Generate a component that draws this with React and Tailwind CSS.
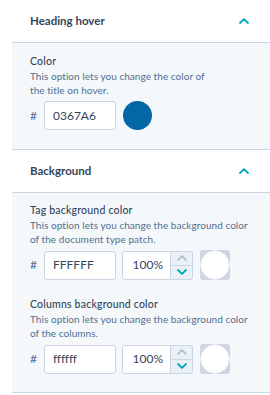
import React from "react";

const font = { fontFamily: "Lato, 'Noto Sans', sans-serif" };

const Chevron = ({ up = true, color = "#00a4bd" }) => (
  <svg width="10" height="6" viewBox="0 0 10 6" fill="none">
    <path
      d={up ? "M1 5L5 1.2L9 5" : "M1 1L5 4.8L9 1"}
      stroke={color}
      strokeWidth="1.8"
      strokeLinecap="round"
      strokeLinejoin="round"
    />
  </svg>
);

const Header = ({ title }) => (
  <div className="h-[43px] flex items-center justify-between pl-[18px] pr-[21px] border-b border-[#cbd6e2] bg-white">
    <span className="text-[11.5px] font-bold text-[#33475b]">{title}</span>
    <Chevron />
  </div>
);

const Field = ({ label, desc }) => (
  <div className="whitespace-nowrap">
    <div className="text-[10.5px] font-medium text-[#33475b] leading-[16px] tracking-[0.2px]">{label}</div>
    <p className="text-[10px] text-[#516f90] leading-[13.5px] mt-[1px] tracking-[0.05px]">{desc}</p>
  </div>
);

const HexInput = ({ value }) => (
  <div className="flex items-center">
    <span className="w-[14px] text-[12px] text-[#516f90]">#</span>
    <div className="w-[72px] h-[29px] bg-white border border-[#cbd6e2] rounded-[3px] flex items-center pl-[8px] text-[12px] text-[#33475b]">
      {value}
    </div>
  </div>
);

const AlphaInput = () => (
  <div className="flex ml-[6px]">
    <div className="w-[49px] h-[29px] bg-white border border-[#cbd6e2] rounded-l-[3px] flex items-center justify-end pr-[7px] text-[12px] text-[#33475b]">
      100%
    </div>
    <div className="w-[22px] h-[29px] flex flex-col border border-l-0 border-[#cbd6e2] rounded-r-[3px] bg-[#eaf0f6]">
      <div className="flex-1 flex items-center justify-center border-b border-[#cbd6e2]">
        <Chevron color="#b0c1d4" />
      </div>
      <div className="flex-1 flex items-center justify-center">
        <Chevron up={false} />
      </div>
    </div>
  </div>
);

const WhiteSwatch = () => (
  <div className="ml-[7px] w-[30px] h-[30px] bg-[#cbd6e2] rounded-[3px] flex">
    <div className="w-full h-full rounded-full bg-white border border-[#dfe3eb]" />
  </div>
);

export default function App() {
  return (
    <div className="w-[270px] h-[395px] bg-white pl-[12px] overflow-hidden" style={font}>
      <Header title="Heading hover" />
      <div className="bg-[#f5f8fa] pl-[18px] pr-[10px] pt-[10px] pb-[19px] border-b border-[#cbd6e2]">
        <Field
          label="Color"
          desc={<>This option lets you change the color of<br />the title on hover.</>}
        />
        <div className="flex items-center mt-[4px]">
          <HexInput value="0367A6" />
          <div className="ml-[7px] w-[29px] h-[29px] rounded-full bg-[#0367a6]" />
        </div>
      </div>
      <Header title="Background" />
      <div className="bg-[#f5f8fa] pl-[18px] pr-[10px] pt-[9px] pb-[18px] border-b border-[#cbd6e2]">
        <Field
          label="Tag background color"
          desc={<>This option lets you change the background color<br />of the document type patch.</>}
        />
        <div className="flex items-center mt-[4px]">
          <HexInput value="FFFFFF" />
          <AlphaInput />
          <WhiteSwatch />
        </div>
        <div className="mt-[16px]">
          <Field
            label="Columns background color"
            desc={<>This option lets you change the background color<br />of the columns.</>}
          />
        </div>
        <div className="flex items-center mt-[4px]">
          <HexInput value="ffffff" />
          <AlphaInput />
          <WhiteSwatch />
        </div>
      </div>
    </div>
  );
}
